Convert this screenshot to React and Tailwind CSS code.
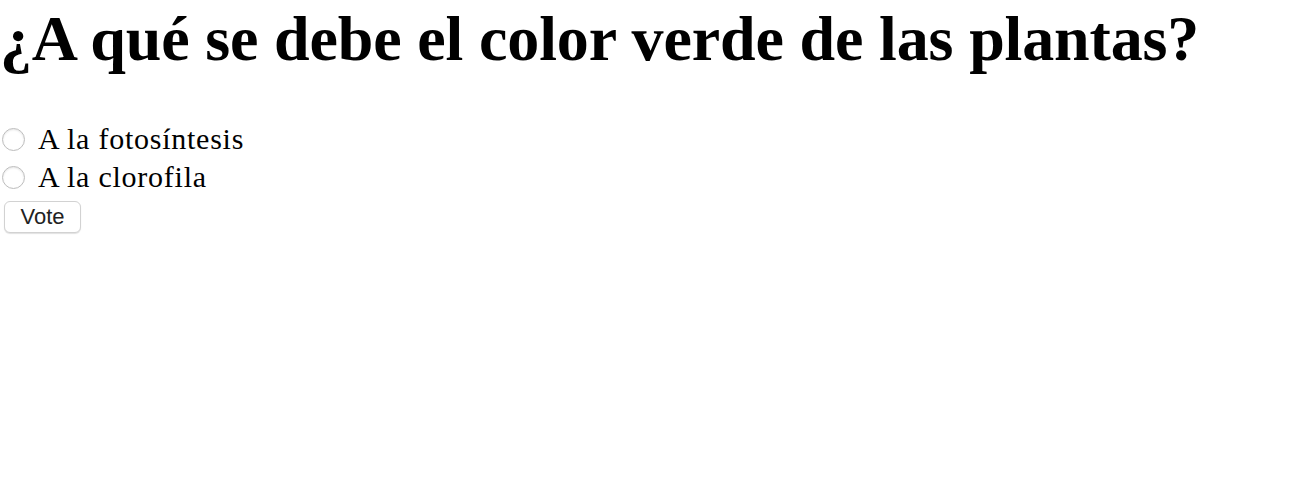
import { useState } from "react";

const options = ["A la fotosíntesis", "A la clorofila"];

const Radio = ({ checked, onClick }) => (
  <span
    onClick={onClick}
    className="w-[23px] h-[23px] rounded-full border border-[#bdbdbd] bg-white shadow-[inset_0_1px_2px_rgba(0,0,0,0.1)] flex items-center justify-center shrink-0"
  >
    {checked && <span className="w-[11px] h-[11px] rounded-full bg-[#1a73e8]" />}
  </span>
);

export default function App() {
  const [choice, setChoice] = useState(null);

  return (
    <div className="bg-white min-h-[486px] text-black font-['Liberation_Serif',serif]">
      <h1 className="text-[64px] font-bold leading-[74px] pt-[2px] tracking-[-0.15px]">
        ¿A qué se debe el color verde de las plantas?
      </h1>

      <form className="mt-[44px] flex flex-col">
        {options.map((opt, i) => (
          <label key={opt} className="flex items-center h-[38px] pl-[2px] cursor-pointer">
            <Radio checked={choice === i} onClick={() => setChoice(i)} />
            <span className="ml-[13px] text-[30px] tracking-[0.75px] leading-none">{opt}</span>
          </label>
        ))}
        <div className="pl-[4px] pt-[5px]">
          <button
            type="button"
            className="w-[77px] h-[32px] rounded-[6px] border border-[#d2d2d2] bg-white shadow-[0_1px_1px_rgba(0,0,0,0.12)] text-[22px] text-[#222] font-['Liberation_Sans',sans-serif] leading-none"
          >
            Vote
          </button>
        </div>
      </form>
    </div>
  );
}
